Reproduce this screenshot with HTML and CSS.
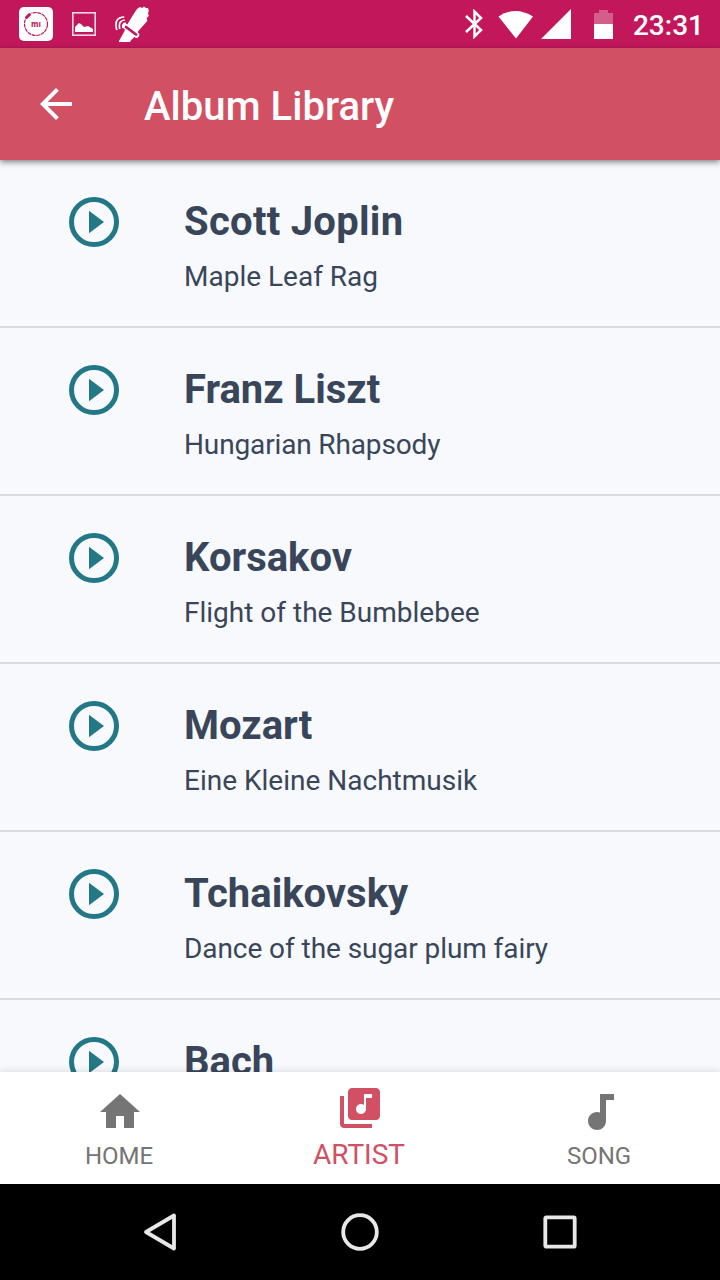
FILE: index.html
```
<!DOCTYPE html>
<html lang="en">
<head>
<meta charset="utf-8">
<title>Album Library</title>
<link rel="stylesheet" href="styles.css">
</head>
<body>
<svg class="defs" width="0" height="0" aria-hidden="true">
  <symbol id="play" viewBox="0 0 24 24">
    <circle cx="12" cy="12" r="9" fill="none" stroke="currentColor" stroke-width="2"/>
    <path fill="currentColor" d="M10 16.5l6-4.500-6-4.500z"/>
  </symbol>
</svg>
<div class="screen">
  <div class="status">
    <div class="notices">
      <svg width="34" height="34" viewBox="0 0 34 34">
        <rect width="34" height="34" rx="5" fill="#fff"/>
        <circle cx="17" cy="17" r="11.500" fill="none" stroke="#c2185b" stroke-width="1.200" stroke-dasharray="4 .6"/>
        <path d="M5 11l6-6" stroke="#fff" stroke-width="6"/>
        <path d="M7.500 10.500l3-3" stroke="#c2185b" stroke-width="3" stroke-linecap="round"/>
        <text class="mi" x="17" y="20" text-anchor="middle" textLength="10" lengthAdjust="spacingAndGlyphs">mı</text>
      </svg>
      <svg width="24" height="24" viewBox="0 0 24 24">
        <rect x=".8" y=".8" width="22.400" height="22.400" fill="none" stroke="#f7d9e5" stroke-width="1.600"/>
        <path fill="#fff" d="M3 20v-5l4-4 2 1 3 3 4-1 5 3v3z"/>
      </svg>
      <svg width="34" height="36" viewBox="0 0 34 36" fill="none">
        <path fill="#fff" d="M18 9l4-6 3-2 2 1 2-1.500 2 1.500 2 0 .8 3-.8 2 .8 3-2 2 .5 3-9 10-1 3-6 6-2 3H4v-2l5-9 3-7z"/>
        <path d="M10.500 20.500l11 8.500" stroke="#fff" stroke-width="5.500" stroke-linecap="round"/>
        <path d="M11 21l10 7.500" stroke="#c2185b" stroke-width="2.800" stroke-linecap="round"/>
        <path d="M8 22q-1-5 3-4.500M4.800 23q-2-8.500 5-9M1.800 24q-3.500-12.500 7.500-13" stroke="#fff" stroke-width="1.700"/>
      </svg>
    </div>
    <div class="system">
      <svg width="18" height="30" viewBox="0 0 18 30" fill="none" stroke="#fff" stroke-width="2.500">
        <path d="M1 7l15 14-6.500 6.500V2.500L16 9 1 23"/>
      </svg>
      <svg width="36" height="29" viewBox="0 0 36 29"><path fill="#fff" d="M.5 6.500Q17.500-4.500 35 6.500L18 28.500z"/></svg>
      <svg width="30" height="30" viewBox="0 0 30 30"><path fill="#fff" d="M30 0v30H0z"/></svg>
      <svg width="19" height="29" viewBox="0 0 19 29">
        <path fill="#fff" fill-opacity=".3" d="M0 3h5V0h9v3h5v11H0z"/>
        <path fill="#fff" d="M0 14h19v15H0z"/>
      </svg>
      <span class="clock">23:31</span>
    </div>
  </div>
  <header class="appbar">
    <svg width="48" height="48" viewBox="0 0 24 24"><path fill="#fff" d="M20 11H7.830l5.590-5.590L12 4l-8 8 8 8 1.410-1.410L7.830 13H20z"/></svg>
    <h1>Album Library</h1>
  </header>
  <main class="list">
    <div class="row"><svg class="play"><use href="#play"/></svg><div><h2 class="loose">Scott Joplin</h2><p>Maple Leaf Rag</p></div></div>
    <div class="row"><svg class="play"><use href="#play"/></svg><div><h2>Franz Liszt</h2><p class="tight">Hungarian Rhapsody</p></div></div>
    <div class="row"><svg class="play"><use href="#play"/></svg><div><h2>Korsakov</h2><p>Flight of the Bumblebee</p></div></div>
    <div class="row"><svg class="play"><use href="#play"/></svg><div><h2>Mozart</h2><p>Eine Kleine Nachtmusik</p></div></div>
    <div class="row"><svg class="play"><use href="#play"/></svg><div><h2>Tchaikovsky</h2><p class="snug">Dance of the sugar plum fairy</p></div></div>
    <div class="row"><svg class="play"><use href="#play"/></svg><div><h2>Bach</h2></div></div>
  </main>
  <nav class="tabs">
    <div class="tab"><svg width="48" height="48" viewBox="0 0 24 24"><path fill="currentColor" d="M10 20v-6h4v6h5v-8h3L12 3 2 12h3v8z"/></svg><span>HOME</span></div>
    <div class="tab active"><svg width="48" height="48" viewBox="0 0 24 24"><path fill="currentColor" d="M20 2H8c-1.100 0-2 .9-2 2v12c0 1.100.9 2 2 2h12c1.100 0 2-.9 2-2V4c0-1.100-.9-2-2-2zm-2 5h-3v5.500c0 1.380-1.120 2.500-2.500 2.500S10 13.880 10 12.500s1.120-2.500 2.500-2.500c.57 0 1.080.19 1.500.51V5h4v2zM4 6H2v14c0 1.100.9 2 2 2h14v-2H4V6z"/></svg><span>ARTIST</span></div>
    <div class="tab"><svg width="48" height="48" viewBox="0 0 24 24"><path fill="currentColor" d="M12 3v9.280c-.47-.17-.97-.28-1.500-.28C8.010 12 6 14.010 6 16.500S8.010 21 10.500 21c2.310 0 4.200-1.750 4.450-4H15V6h4V3h-7z"/></svg><span>SONG</span></div>
  </nav>
  <div class="sysnav">
    <svg width="40" height="40" viewBox="0 0 40 40"><path d="M6 20L34 3.500v33z"/></svg>
    <svg width="40" height="40" viewBox="0 0 40 40"><circle cx="20" cy="20" r="16.800"/></svg>
    <svg width="40" height="40" viewBox="0 0 40 40"><rect x="5.300" y="5.300" width="29.400" height="29.400" rx="1"/></svg>
  </div>
</div>
</body>
</html>
```
FILE: styles.css
```
* { box-sizing: border-box; }
body { margin: 0; font-family: Roboto, sans-serif; }
svg { display: block; flex: none; }
h1, h2, p { margin: 0; }
.defs { position: absolute; }
.screen { width: 720px; height: 1280px; display: flex; flex-direction: column; overflow: hidden; background: #f8f9fd; }
.status { height: 48px; flex: none; display: flex; justify-content: space-between; align-items: center; padding: 0 16px 0 19px; background: #c2185b; }
.notices { display: flex; align-items: center; gap: 19px; }
.mi { font: 700 9px "DejaVu Sans", sans-serif; fill: #c2185b; }
.system { display: flex; align-items: center; }
.system svg:nth-child(2) { margin-left: 15px; }
.system svg:nth-child(3) { margin-left: 7px; }
.system svg:nth-child(4) { margin-left: 23px; }
.clock { margin-left: 20px; font-size: 28px; font-weight: 500; line-height: 46px; color: #fff; padding-top: 4px; }
.appbar { height: 112px; flex: none; display: flex; align-items: center; padding: 0 32px; gap: 64px; background: #d15064; box-shadow: 0 2px 6px rgba(0,0,0,.5); z-index: 1; }
.appbar h1 { font-size: 40px; font-weight: 500; line-height: 48px; letter-spacing: .05px; color: #fff; padding-top: 6px; }
.list { flex: 1; min-height: 0; overflow: hidden; }
.row { height: 168px; display: flex; gap: 60px; padding: 32px 64px 0; border-bottom: 2px solid #d9dcdf; }
.play { width: 60px; height: 60px; color: #227884; }
.row h2 { font-size: 40px; font-weight: 700; line-height: 60px; color: #39465a; }
.row p { font-size: 28px; line-height: 36px; color: #39465a; margin-top: 7px; }
.row .loose { letter-spacing: .28px; }
.row .tight { letter-spacing: -.14px; }
.row .snug { letter-spacing: -.07px; }
.tabs { height: 112px; flex: none; display: grid; grid-template-columns: 1fr 1fr 1fr; background: #fff; box-shadow: 0 0 8px rgba(0,0,0,.15); z-index: 1; }
.tab { display: flex; flex-direction: column; align-items: center; padding-top: 16px; color: #757575; font-size: 24px; line-height: 36px; }
.tab span { margin: 2px 2px 0 0; }
.tab.active { padding-top: 12px; color: #d15064; font-size: 28px; }
.tab.active span { margin-top: 5px; }
.sysnav { height: 96px; flex: none; display: flex; justify-content: center; align-items: center; gap: 160px; background: #000; position: relative; z-index: 2; }
.sysnav svg { fill: none; stroke: #e8e8e8; stroke-width: 3.8; stroke-linejoin: round; }
```
